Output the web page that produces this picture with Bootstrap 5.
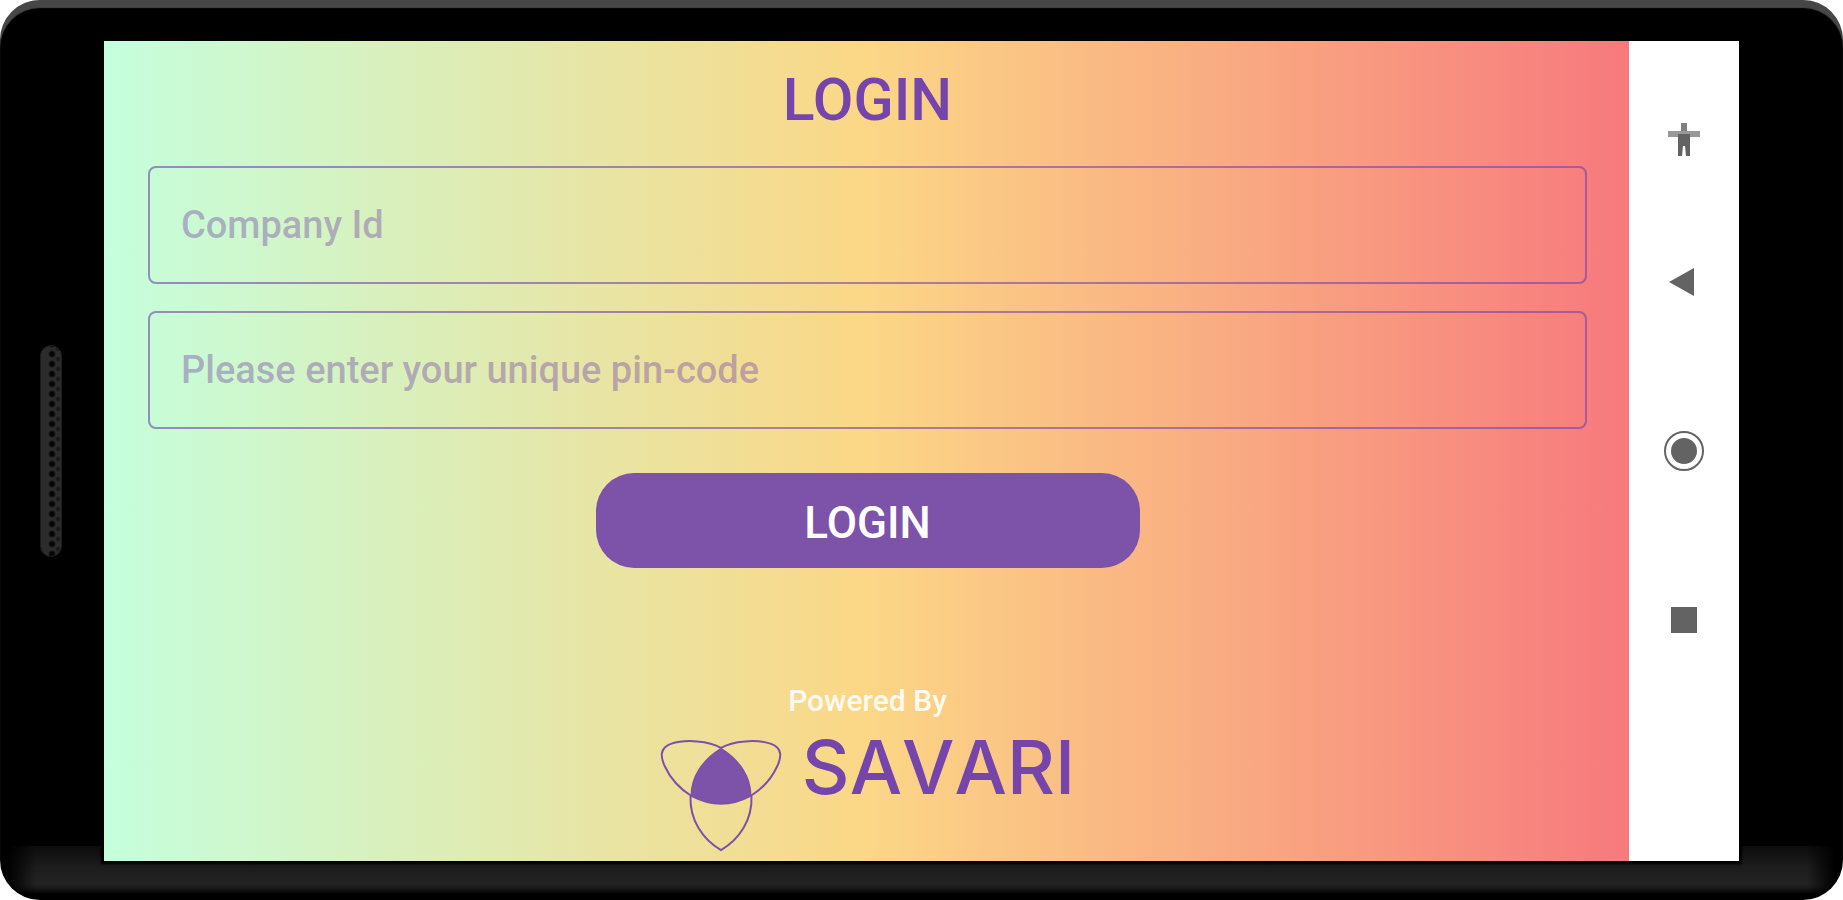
<!DOCTYPE html>
<html lang="en">
<head>
<meta charset="utf-8">
<meta name="viewport" content="width=device-width, initial-scale=1">
<title>Savari – Login</title>
<link href="https://cdn.jsdelivr.net/npm/bootstrap@5.3.0/dist/css/bootstrap.min.css" rel="stylesheet">
<style>
  :root { --brand: #7d53aa; --brand-deep: #7545ab; }
  body { font-family: Roboto, "Liberation Sans", sans-serif; background: #fff; }

  /* Phone body: light rim on top, grey chin at the bottom */
  .device {
    padding: 41px 0 39px;
    border-radius: 40px;
    background:
      linear-gradient(90deg, #000 8px, transparent 36px, transparent calc(100% - 36px), #000 calc(100% - 8px)) bottom / 100% 54px no-repeat,
      linear-gradient(#0c0c0c, #1d1d1d 22px, #222 38px, #1a1a1a 42px, #000 48px) bottom / 100% 54px no-repeat,
      #000;
    box-shadow: inset 0 8px 1px #474747;
  }
  .bezel { flex: 0 0 104px; }
  .speaker {
    width: 22px; height: 212px; margin-right: 2px; border-radius: 11px;
    background:
      radial-gradient(circle at 11px 5px, #050505 2px, transparent 4px) 0 3px / 22px 10px,
      radial-gradient(circle at 17px 5px, #181818 1px, transparent 3px) 0 8px / 22px 10px,
      #2c2c2c;
    border: 1px solid #1c1c1c;
  }
  .screen { box-shadow: 0 0 2px 3px #000; }
  .app {
    padding: 24px 42px 8px 44px;
    background: linear-gradient(90deg, #c4ffdd, #fbd786 50%, #f7797d);
  }
  .app-title { font-size: 59px; line-height: 70px; font-weight: 500; color: var(--brand-deep); margin-bottom: 31px; }
  .field, .field:focus {
    height: 118px; padding: 0 31px; border: 2px solid rgba(115, 66, 171, .6); border-radius: 8px;
    background: transparent; color: var(--brand); font-size: 38px; font-weight: 500;
  }
  .field::placeholder { color: rgba(125, 83, 171, .45); opacity: 1; }
  .fields { gap: 27px; }
  .btn-login, .btn-login:hover {
    width: 544px; max-width: 100%; height: 95px; margin-top: 44px; padding: 4px 0 0; border: 0; border-radius: 38px;
    background: var(--brand); color: #fff; font-size: 44px; font-weight: 500;
  }
  .powered { font-size: 30px; line-height: 36px; font-weight: 500; color: #fffaf0; }
  .brand-name { font-family: Inter, Roboto, sans-serif; font-size: 74px; line-height: 56px; font-weight: 500; font-kerning: none; color: var(--brand-deep); }
  .brand-row { gap: 20px; margin-top: 20px; }
  .sysbar { flex: 0 0 110px; padding-top: 79px; }
  .sys-btn { width: 40px; height: 40px; padding: 0; border: 0; background: none; color: #636363; display: block; }
  .gap-short { margin-bottom: 102px; }
  .gap-long { margin-bottom: 129px; }
</style>
</head>
<body>
<div class="device d-flex min-vh-100">
  <div class="bezel d-flex align-items-center justify-content-center"><div class="speaker"></div></div>

  <div class="screen d-flex flex-grow-1">
    <main class="app d-flex flex-column flex-grow-1">
      <h1 class="app-title text-center">LOGIN</h1>
      <form class="d-flex flex-column align-items-center">
        <div class="fields d-flex flex-column w-100">
          <input class="field form-control shadow-none" id="company" type="text" placeholder="Company Id" aria-label="Company Id">
          <input class="field form-control shadow-none" id="pin" type="text" placeholder="Please enter your unique pin-code" aria-label="Please enter your unique pin-code">
        </div>
        <button class="btn btn-login" type="button">LOGIN</button>
      </form>
      <footer class="mt-auto d-flex flex-column align-items-center">
        <div class="powered">Powered By</div>
        <div class="brand-row d-flex align-items-start">
          <svg width="122" height="114" viewBox="-1 0 124 114" fill="none" stroke="#7d4fa8" stroke-width="2" aria-hidden="true">
            <path d="M61 8C49 1 25-1 10 4C-1 8-1 17 4 27C10 40 18 49 31 57"/>
            <path d="M61 8C73 1 97-1 112 4C123 8 123 17 118 27C112 40 104 49 91 57"/>
            <path d="M30 57C29 81 42 101 61 112C80 101 93 81 92 57"/>
            <path fill="#7d53aa" d="M61 9C42 21 31 38 31 57Q61 73 91 57C91 38 80 21 61 9Z"/>
          </svg>
          <span class="brand-name">SAVARI</span>
        </div>
      </footer>
    </main>

    <nav class="sysbar bg-white d-flex flex-column align-items-center" aria-label="System">
      <button class="sys-btn gap-short" type="button" aria-label="Accessibility">
        <svg width="40" height="40" viewBox="0 0 40 40" fill="currentColor"><path fill="#808080" d="M17 3h6v8h-6z"/><path fill="#999" d="M4 11h32v6H4z"/><path d="M14 14h12v22h-4l-1-10h-2l-1 10h-4z"/></svg>
      </button>
      <button class="sys-btn gap-long" type="button" aria-label="Back">
        <svg width="40" height="40" viewBox="0 0 40 40" fill="currentColor"><path d="M5 20L30 6v28z"/></svg>
      </button>
      <button class="sys-btn gap-long" type="button" aria-label="Home">
        <svg width="40" height="40" viewBox="0 0 40 40"><circle cx="20" cy="20" r="19" fill="none" stroke="currentColor" stroke-width="2"/><circle cx="20" cy="20" r="13" fill="currentColor"/></svg>
      </button>
      <button class="sys-btn" type="button" aria-label="Recent apps">
        <svg width="40" height="40" viewBox="0 0 40 40" fill="currentColor"><path d="M7 7h26v26H7z"/></svg>
      </button>
    </nav>
  </div>

  <div class="bezel"></div>
</div>
<script src="https://cdn.jsdelivr.net/npm/bootstrap@5.3.0/dist/js/bootstrap.bundle.min.js"></script>
</body>
</html>
